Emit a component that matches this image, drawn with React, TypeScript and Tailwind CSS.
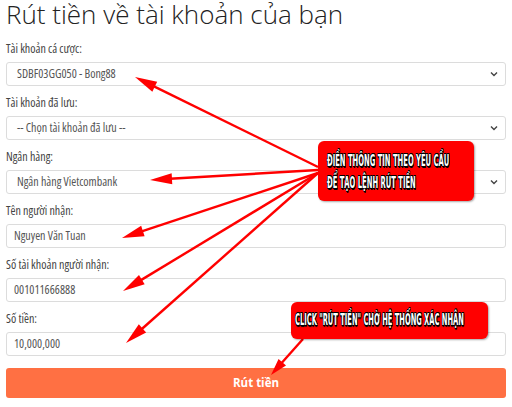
import React from "react";

const font = { fontFamily: '"Open Sans", "Noto Sans", sans-serif' };

function Chevron() {
  return (
    <svg width="8" height="6" viewBox="0 0 8 6" className="shrink-0">
      <path d="M1 1.5 L4 4.5 L7 1.5" fill="none" stroke="#444" strokeWidth="1.4" />
    </svg>
  );
}

function Field({ label, value, select }: { label: string; value: string; select?: boolean }) {
  return (
    <div className="mb-[8px]">
      <div className="text-[12px] [font-stretch:86%] leading-[18px] text-[#444] mb-[4px]">{label}</div>
      <div
        className={`h-[24px] border border-[#dcdcdc] rounded-[3px] bg-white flex items-center justify-between text-[12px] [font-stretch:84%] text-[#555] ${
          select ? "pl-[10px] pr-[7px]" : "pl-[7px] pr-[7px]"
        }`}
      >
        <span>{value}</span>
        {select && <Chevron />}
      </div>
    </div>
  );
}

function arrow(x1: number, y1: number, x2: number, y2: number, len: number, w: number) {
  const dx = x2 - x1;
  const dy = y2 - y1;
  const d = Math.sqrt(dx * dx + dy * dy);
  const ux = dx / d;
  const uy = dy / d;
  const bx = x2 - ux * len;
  const by = y2 - uy * len;
  const px = -uy * (w / 2);
  const py = ux * (w / 2);
  return {
    line: { x1, y1, x2: bx + ux * 2, y2: by + uy * 2 },
    pts: `${x2},${y2} ${bx + px},${by + py} ${bx - px},${by - py}`,
  };
}

const arrows = [
  arrow(318, 167, 135, 77, 22, 11),
  arrow(318, 170, 150, 180, 22, 11),
  arrow(318, 173, 122, 238, 22, 11),
  arrow(318, 173, 123, 291, 22, 11),
  arrow(318, 173, 126, 343, 22, 11),
  arrow(303, 339, 271, 375, 17, 10),
];

const outline =
  "[text-shadow:-1px_-1px_0_#000,1px_-1px_0_#000,-1px_1px_0_#000,1px_1px_0_#000,0_1px_0_#000,0_-1px_0_#000,1px_0_0_#000,-1px_0_0_#000,1px_2px_1px_#000]";

export default function App() {
  return (
    <div className="relative w-[512px] h-[407px] bg-white overflow-hidden" style={font}>
      <div className="px-[6px]">
        <h1 className="text-[26px] [font-stretch:88%] leading-[26px] font-light text-[#222] pt-[1px] mb-[13px] whitespace-nowrap">
          Rút tiền về tài khoản của bạn
        </h1>
        <Field label="Tài khoản cá cược:" value="SDBF03GG050 - Bong88" select />
        <Field label="Tài khoản đã lưu:" value="-- Chọn tài khoản đã lưu --" select />
        <Field label="Ngân hàng:" value="Ngân hàng Vietcombank" select />
        <Field label="Tên người nhận:" value="Nguyen Văn Tuan" />
        <Field label="Số tài khoản người nhận:" value="001011666888" />
        <Field label="Số tiền:" value="10,000,000" />
        <button className="mt-[4px] w-full h-[30px] rounded-[3px] bg-[#ff7043] text-white text-[11.5px] [font-stretch:90%] font-bold">
          Rút tiền
        </button>
      </div>

      <svg className="absolute inset-0 pointer-events-none" width="512" height="407">
        {arrows.map((a, i) => (
          <g key={i}>
            <line {...a.line} stroke="#f00" strokeWidth="2.4" />
            <polygon points={a.pts} fill="#f00" />
          </g>
        ))}
      </svg>

      <div className="absolute left-[318px] top-[141px] w-[156px] h-[60px] bg-[#f00] rounded-[6px] shadow-[1px_1px_2px_rgba(0,0,0,0.35)]">
        <div
          className={`absolute left-[9px] top-[9px] origin-left scale-x-[0.425] whitespace-nowrap text-white font-bold text-[16px] leading-[22px] ${outline}`}
          style={{ fontFamily: '"DejaVu Sans", sans-serif' }}
        >
          <div>ĐIỀN THÔNG TIN THEO YÊU CẦU</div>
          <div>ĐỂ TẠO LỆNH RÚT TIỀN</div>
        </div>
      </div>

      <div className="absolute left-[291px] top-[302px] w-[197px] h-[37px] bg-[#f00] rounded-[6px] shadow-[1px_1px_2px_rgba(0,0,0,0.35)]">
        <div
          className={`absolute left-[4px] top-[8px] origin-left scale-x-[0.448] whitespace-nowrap text-white font-bold text-[15px] leading-[20px] ${outline}`}
          style={{ fontFamily: '"DejaVu Sans", sans-serif' }}
        >
          CLICK "RÚT TIỀN" CHỜ HỆ THỐNG XÁC NHẬN
        </div>
      </div>
    </div>
  );
}
